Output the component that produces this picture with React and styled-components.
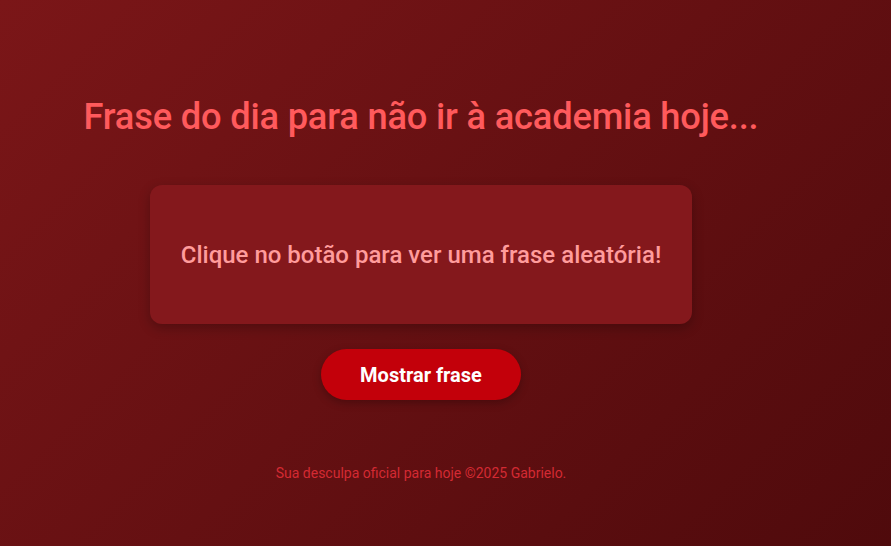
import styled, { createGlobalStyle } from "styled-components";

const Global = createGlobalStyle`
  html, body {
    margin: 0;
    padding: 0;
  }
  body {
    font-family: Roboto, "Liberation Sans", sans-serif;
    background: linear-gradient(135deg, #7b1618 0%, #4f0a0c 100%);
    min-height: 546px;
  }
`;

const Page = styled.div`
  width: 842px;
  min-height: 546px;
  display: flex;
  flex-direction: column;
  align-items: center;
  padding-top: 95px;
  box-sizing: border-box;
`;

const Title = styled.h1`
  margin: 0;
  font-size: 36.3px;
  font-weight: 500;
  color: #ff5a5c;
  letter-spacing: -0.2px;
`;

const Card = styled.div`
  margin-top: 47px;
  width: 542px;
  height: 139px;
  background: #84181c;
  border-radius: 12px;
  box-shadow: 0 4px 12px rgba(0, 0, 0, 0.25);
  display: flex;
  align-items: center;
  justify-content: center;
`;

const Phrase = styled.p`
  margin: 0;
  font-size: 24px;
  font-weight: 500;
  color: #ff9c9c;
`;

const Button = styled.button`
  margin-top: 25px;
  width: 200px;
  height: 51px;
  border: none;
  border-radius: 26px;
  background: #c3000a;
  color: #fff;
  font-family: inherit;
  font-size: 20px;
  font-weight: 700;
  box-shadow: 0 3px 8px rgba(0, 0, 0, 0.25);
  cursor: pointer;
`;

const Footer = styled.footer`
  margin-top: 65px;
  font-size: 14px;
  color: #d42a33;
`;

export default function App() {
  return (
    <>
      <Global />
      <Page>
        <Title>Frase do dia para não ir à academia hoje...</Title>
        <Card>
          <Phrase>Clique no botão para ver uma frase aleatória!</Phrase>
        </Card>
        <Button>Mostrar frase</Button>
        <Footer>Sua desculpa oficial para hoje ©2025 Gabrielo.</Footer>
      </Page>
    </>
  );
}
